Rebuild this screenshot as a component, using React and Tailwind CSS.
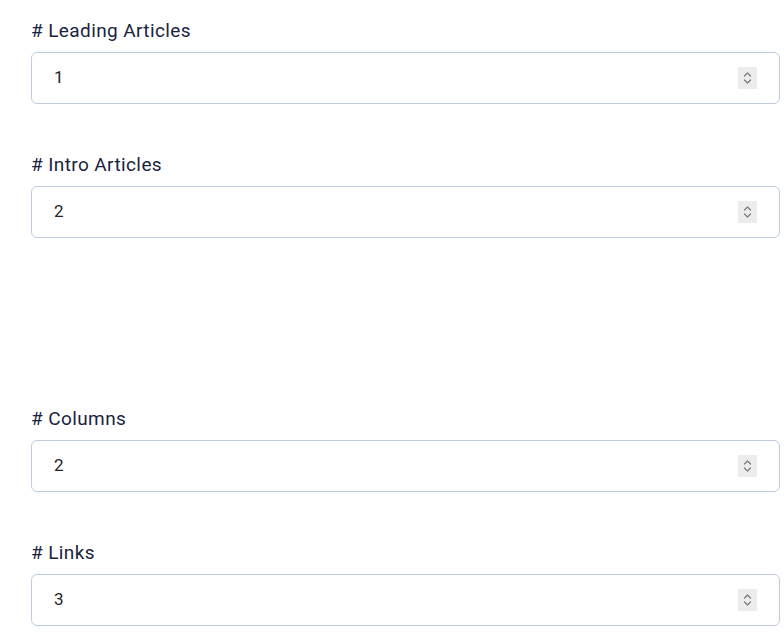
import React from 'react';

const fields = [
  { label: '# Leading Articles', value: '1' },
  { label: '# Intro Articles', value: '2' },
  null,
  { label: '# Columns', value: '2' },
  { label: '# Links', value: '3' },
];

function Spinner() {
  return (
    <div className="flex h-[22px] w-[19px] items-center justify-center bg-[#ececec]">
      <svg width="9" height="14" viewBox="0 0 9 14" fill="none" stroke="#7a7a7a" strokeWidth="1.2" strokeLinecap="round" strokeLinejoin="round">
        <path d="M1.5 5 L4.5 2 L7.5 5" />
        <path d="M1.5 9 L4.5 12 L7.5 9" />
      </svg>
    </div>
  );
}

function NumberField({ label, value }) {
  return (
    <div className="mb-[47px]">
      <label className="block text-[19px] leading-[27px] tracking-[0.4px] text-[#1a2340] mb-2">{label}</label>
      <div className="flex h-[52px] items-center justify-between rounded-[6px] border border-[#bfcbe0] bg-white pl-[22px] pr-[22px]">
        <span className="text-[17px] text-[#212529]">{value}</span>
        <Spinner />
      </div>
    </div>
  );
}

export default function App() {
  return (
    <div
      className="min-h-[634px] bg-white pl-[31px] pr-[4px] pt-[17px]"
      style={{ fontFamily: 'Roboto, "Noto Sans", sans-serif' }}
    >
      {fields.map((f, i) =>
        f ? <NumberField key={i} {...f} /> : <div key={i} className="h-[120px]" />
      )}
    </div>
  );
}
